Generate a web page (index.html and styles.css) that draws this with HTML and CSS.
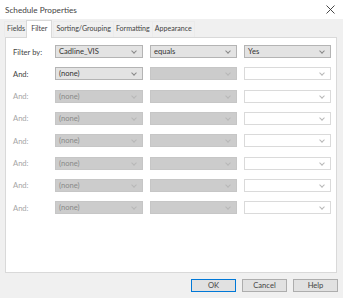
FILE: index.html
```html
<!DOCTYPE html>
<html lang="en">
<head>
  <meta charset="UTF-8" />
  <title>Schedule Properties</title>
  <link rel="stylesheet" href="styles.css">
</head>
<body>
  <div class="dialog">
    <div class="titlebar">
      <span>Schedule Properties</span>
      <svg class="close" width="9" height="9" viewBox="0 0 9 9"><path d="M0.5 0.5 L8.5 8.5 M8.5 0.5 L0.5 8.5" stroke="#333" stroke-width="0.9" fill="none"/></svg>
    </div>
    <div class="tabs">
      <div class="tab">Fields</div>
      <div class="tab active">Filter</div>
      <div class="tab">Sorting/Grouping</div>
      <div class="tab">Formatting</div>
      <div class="tab">Appearance</div>
    </div>
    <div class="panel">
      <div class="row">
        <span class="label">Filter by:</span>
        <div class="combo">Cadline_VIS<i class="chev"></i></div>
        <div class="combo">equals<i class="chev"></i></div>
        <div class="combo">Yes<i class="chev"></i></div>
      </div>
      <div class="row">
        <span class="label">And:</span>
        <div class="combo">(none)<i class="chev"></i></div>
        <div class="combo off"><i class="chev"></i></div>
        <div class="combo blank"><i class="chev"></i></div>
      </div>
      <!-- disabled rows -->
      <div class="row dim">
        <span class="label">And:</span>
        <div class="combo off">(none)<i class="chev"></i></div>
        <div class="combo off"><i class="chev"></i></div>
        <div class="combo blank"><i class="chev"></i></div>
      </div>
      <div class="row dim">
        <span class="label">And:</span>
        <div class="combo off">(none)<i class="chev"></i></div>
        <div class="combo off"><i class="chev"></i></div>
        <div class="combo blank"><i class="chev"></i></div>
      </div>
      <div class="row dim">
        <span class="label">And:</span>
        <div class="combo off">(none)<i class="chev"></i></div>
        <div class="combo off"><i class="chev"></i></div>
        <div class="combo blank"><i class="chev"></i></div>
      </div>
      <div class="row dim">
        <span class="label">And:</span>
        <div class="combo off">(none)<i class="chev"></i></div>
        <div class="combo off"><i class="chev"></i></div>
        <div class="combo blank"><i class="chev"></i></div>
      </div>
      <div class="row dim">
        <span class="label">And:</span>
        <div class="combo off">(none)<i class="chev"></i></div>
        <div class="combo off"><i class="chev"></i></div>
        <div class="combo blank"><i class="chev"></i></div>
      </div>
      <div class="row dim">
        <span class="label">And:</span>
        <div class="combo off">(none)<i class="chev"></i></div>
        <div class="combo off"><i class="chev"></i></div>
        <div class="combo blank"><i class="chev"></i></div>
      </div>
    </div>
    <div class="buttons">
      <div class="btn default">OK</div>
      <div class="btn">Cancel</div>
      <div class="btn">Help</div>
    </div>
  </div>
</body>
</html>
```

FILE: styles.css
```css
body {
  margin: 0;
  font-family: Lato, 'Open Sans', sans-serif;
  font-size: 7.6px;
  color: #333;
  background-color: #f0f0f0;
}

.dialog {
  width: 343px;
  height: 298px;
  display: flex;
  flex-direction: column;
}

.titlebar {
  height: 19px;
  background-color: #fff;
  display: flex;
  align-items: center;
  justify-content: space-between;
  padding: 0 8px 0 5px;
  font-size: 8.2px;
  color: #444;
}

.tabs {
  height: 18px;
  display: flex;
  align-items: flex-end;
  padding-left: 4px;
  font-size: 7.1px;
}

.tab {
  height: 15px;
  line-height: 14px;
  padding: 0 2px;
  border: 1px solid #ebebeb;
  border-bottom: none;
  margin-right: -1px;
  color: #444;
}

.tab.active {
  height: 17px;
  line-height: 16px;
  background-color: #fff;
  border-color: #d9d9d9;
  padding: 0 4px;
  margin: 0 1px -1px -1px;
  position: relative;
}

.panel {
  height: 236px;
  box-sizing: border-box;
  margin: 0 6px 0 5px;
  background-color: #fff;
  border: 1px solid #d9d9d9;
  padding: 7px 0 0 7px;
  display: flex;
  flex-direction: column;
  gap: 9.33px;
}

.row {
  display: grid;
  grid-template-columns: 35px 88px 87px 87px;
  column-gap: 7px;
  height: 13px;
  align-items: center;
}

.label {
  color: #444;
}

.row.dim .label {
  color: #a6a6a6;
}

.combo {
  height: 13px;
  box-sizing: border-box;
  border: 1px solid #b4b4b4;
  background-color: #e3e3e3;
  padding-left: 3px;
  line-height: 11px;
  position: relative;
  color: #333;
}

.combo.off {
  background-color: #cccccc;
  border-color: #c6c6c6;
  color: #8a8a8a;
}

.combo.blank {
  background-color: #fff;
  border-color: #dadada;
}

.chev {
  position: absolute;
  right: 6px;
  top: 3px;
  width: 3px;
  height: 3px;
  border-right: 1px solid #888;
  border-bottom: 1px solid #888;
  transform: rotate(45deg);
}

.combo.off .chev,
.combo.blank .chev {
  border-color: #b8b8b8;
}

.buttons {
  display: flex;
  justify-content: flex-end;
  gap: 6px;
  padding: 6px 5px 0 0;
}

.btn {
  width: 45px;
  height: 13px;
  box-sizing: border-box;
  border: 1px solid #adadad;
  background-color: #e1e1e1;
  text-align: center;
  line-height: 11px;
  color: #444;
}

.btn.default {
  border-color: #0078d7;
}
```
